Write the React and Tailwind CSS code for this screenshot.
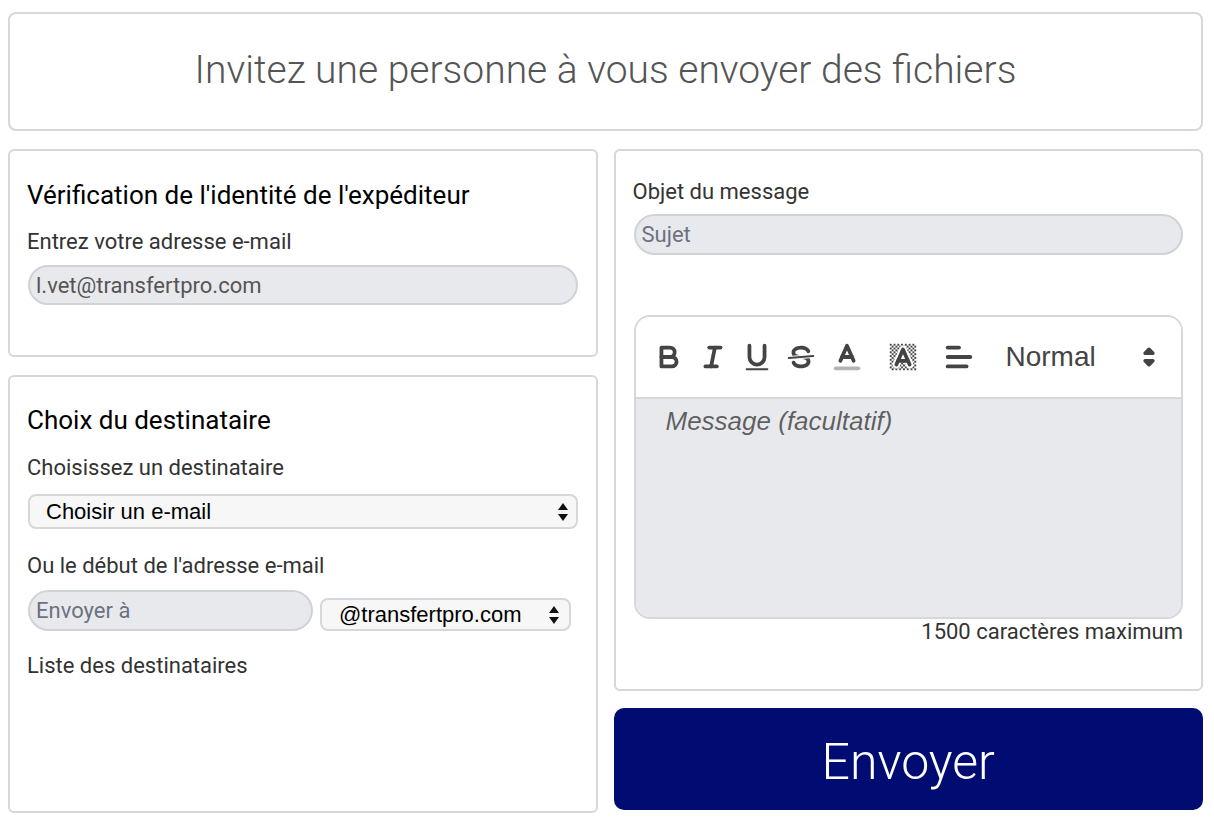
import React from "react";

const roboto = { fontFamily: "Roboto, 'Liberation Sans', sans-serif" };

function SelectArrows({ className = "" }) {
  return (
    <svg width="12" height="20" viewBox="0 0 12 20" className={className}>
      <polygon points="6,1 11,8 1,8" fill="#111" />
      <polygon points="1,12 11,12 6,19" fill="#111" />
    </svg>
  );
}

const stroke = {
  fill: "none",
  stroke: "#444",
  strokeWidth: 2,
  strokeLinecap: "round",
  strokeLinejoin: "round",
};

function IconBold() {
  return (
    <svg width="34" height="34" viewBox="0 0 18 18">
      <path {...stroke} d="M5,4H9.5A2.5,2.5,0,0,1,12,6.5v0A2.5,2.5,0,0,1,9.5,9H5A0,0,0,0,1,5,9V4A0,0,0,0,1,5,4Z" />
      <path {...stroke} d="M5,9h5.5A2.5,2.5,0,0,1,13,11.5v0A2.5,2.5,0,0,1,10.5,14H5a0,0,0,0,1,0,0V9A0,0,0,0,1,5,9Z" />
    </svg>
  );
}
function IconItalic() {
  return (
    <svg width="34" height="34" viewBox="0 0 18 18">
      <line {...stroke} x1="7" x2="13" y1="4" y2="4" />
      <line {...stroke} x1="5" x2="11" y1="14" y2="14" />
      <line {...stroke} x1="8" x2="10" y1="14" y2="4" />
    </svg>
  );
}
function IconUnderline() {
  return (
    <svg width="34" height="34" viewBox="0 0 18 18">
      <path {...stroke} d="M5,3V9a4.012,4.012,0,0,0,4,4H9a4.012,4.012,0,0,0,4-4V3" />
      <rect fill="#444" height="1" rx="0.5" ry="0.5" width="12" x="3" y="15" />
    </svg>
  );
}
function IconStrike() {
  return (
    <svg width="34" height="34" viewBox="0 0 18 18">
      <line {...stroke} strokeWidth="1" x1="15.5" x2="2.5" y1="8.5" y2="9.5" />
      <path fill="#444" d="M9.007,8C6.542,7.791,6,7.519,6,6.5,6,5.792,7.283,5,9,5c1.571,0,2.765.679,2.969,1.309a1,1,0,0,0,1.9-.617C13.356,4.106,11.354,3,9,3,6.2,3,4,4.538,4,6.5a3.2,3.2,0,0,0,.5,1.843Z" />
      <path fill="#444" d="M8.984,10C11.457,10.208,12,10.479,12,11.5c0,.708-1.283,1.5-3,1.5-1.571,0-2.765-.679-2.969-1.309a1,1,0,1,0-1.9.617C4.644,13.894,6.646,15,9,15c2.8,0,5-1.538,5-3.5a3.2,3.2,0,0,0-.5-1.843Z" />
    </svg>
  );
}
function IconColor() {
  return (
    <svg width="34" height="34" viewBox="0 0 18 18">
      <line {...stroke} stroke="#b4b4b4" x1="3" x2="15" y1="15" y2="15" />
      <polyline {...stroke} points="5.5 11 9 3 12.5 11" />
      <line {...stroke} x1="11.63" x2="6.38" y1="9" y2="9" />
    </svg>
  );
}
const checker = [];
for (let y = 2; y < 16; y++) {
  for (let x = 2; x < 16; x++) {
    if ((x + y) % 2 === 0) checker.push([x, y]);
  }
}
function IconBackground() {
  return (
    <svg width="34" height="34" viewBox="0 0 18 18">
      <g fill="#444">
        {checker.map(([x, y]) => (
          <rect key={x + "-" + y} x={x} y={y} width="1" height="1" />
        ))}
      </g>
      <polyline {...stroke} stroke="#fff" strokeWidth="4" points="5.5 13 9 5 12.5 13" />
      <polyline {...stroke} points="5.5 13 9 5 12.5 13" />
      <line {...stroke} x1="11.63" x2="6.38" y1="11" y2="11" />
    </svg>
  );
}
function IconAlign() {
  return (
    <svg width="34" height="34" viewBox="0 0 18 18">
      <line {...stroke} x1="3" x2="15" y1="9" y2="9" />
      <line {...stroke} x1="3" x2="13" y1="14" y2="14" />
      <line {...stroke} x1="3" x2="9" y1="4" y2="4" />
    </svg>
  );
}
function PickerArrows() {
  return (
    <svg width="34" height="34" viewBox="0 0 18 18">
      <polygon {...stroke} fill="#444" points="7 11 9 13 11 11 7 11" />
      <polygon {...stroke} fill="#444" points="7 7 9 5 11 7 7 7" />
    </svg>
  );
}

export default function App() {
  return (
    <div className="w-[1214px] h-[820px] bg-white overflow-hidden" style={roboto}>
      <div className="ml-2 w-[1195px] pt-3">
        <div className="h-[119px] border-2 border-[#d5d7db] rounded-lg flex items-center justify-center">
          <h1 className="text-[39px] font-light text-[#555] leading-none -mt-[2px]">
            Invitez une personne à vous envoyer des fichiers
          </h1>
        </div>

        <div className="mt-[18px] grid grid-cols-2 gap-4">
          {/* Left column */}
          <div className="flex flex-col gap-[18px]">
            <div className="h-[208px] border-2 border-[#d5d7db] rounded-md pl-[17px] pr-[18px] pt-[30px]">
              <h2 className="text-[26px] leading-[28px] text-black">
                Vérification de l'identité de l'expéditeur
              </h2>
              <div className="mt-[21px] text-[22px] leading-[24px] text-[#333]">
                Entrez votre adresse e-mail
              </div>
              <div className="mt-[11px] ml-px h-[40px] rounded-full bg-[#e8e9ed] border-2 border-[#cfd3d8] flex items-center pl-[6px] text-[22px] text-[#555]">
                l.vet@transfertpro.com
              </div>
            </div>

            <div className="h-[438px] border-2 border-[#d5d7db] rounded-md pl-[17px] pr-[18px] pt-[29px]">
              <h2 className="text-[26px] leading-[28px] text-black">Choix du destinataire</h2>
              <div className="mt-[22px] text-[22px] leading-[24px] text-[#333]">
                Choisissez un destinataire
              </div>
              <div
                className="mt-[14px] ml-px h-[35px] rounded-lg bg-[#f7f7f7] border-2 border-[#d5d7db] flex items-center justify-between pl-[16px] pr-[7px] text-[22px] text-black"
                style={{ fontFamily: "'Liberation Sans', Arial, sans-serif" }}
              >
                <span>Choisir un e-mail</span>
                <SelectArrows />
              </div>
              <div className="mt-[25px] text-[22px] leading-[24px] text-[#333]">
                Ou le début de l'adresse e-mail
              </div>
              <div className="mt-[12px] ml-px flex items-end gap-[7px]">
                <div className="w-[285px] h-[41px] rounded-full bg-[#e8e9ed] border-2 border-[#cfd3d8] flex items-center pl-[6px] text-[22px] text-[#6b7280]">
                  Envoyer à
                </div>
                <div
                  className="w-[251px] h-[33px] rounded-lg bg-[#f7f7f7] border-2 border-[#d5d7db] flex items-center justify-between pl-[17px] pr-[9px] text-[22px] text-black"
                  style={{ fontFamily: "'Liberation Sans', Arial, sans-serif" }}
                >
                  <span>@transfertpro.com</span>
                  <SelectArrows />
                </div>
              </div>
              <div className="mt-[23px] text-[22px] leading-[24px] text-[#333]">
                Liste des destinataires
              </div>
            </div>
          </div>

          {/* Right column */}
          <div className="flex flex-col gap-[17px]">
            <div className="h-[542px] border-2 border-[#d5d7db] rounded-md pl-[17px] pr-[18px] pt-[29px]">
              <div className="text-[22px] leading-[24px] text-[#333]">Objet du message</div>
              <div className="mt-[10px] ml-px h-[41px] rounded-full bg-[#e8e9ed] border-2 border-[#cfd3d8] flex items-center pl-[6px] text-[22px] text-[#6b7280]">
                Sujet
              </div>
              <div className="mt-[60px] ml-px h-[304px] border-2 border-[#d5d7db] rounded-[16px] overflow-hidden flex flex-col">
                <div className="h-[82px] shrink-0 bg-white border-b-2 border-[#d5d7db] flex items-center pl-[16px]">
                  <div className="flex items-center gap-[10px]">
                    <IconBold />
                    <IconItalic />
                    <IconUnderline />
                    <IconStrike />
                  </div>
                  <div className="ml-[12px] flex items-center gap-[22px]">
                    <IconColor />
                    <IconBackground />
                    <IconAlign />
                  </div>
                  <div
                    className="ml-[30px] w-[160px] flex items-center justify-between text-[28px] text-[#444]"
                    style={{ fontFamily: "'Liberation Sans', Arial, sans-serif" }}
                  >
                    <span>Normal</span>
                    <PickerArrows />
                  </div>
                </div>
                <div
                  className="flex-1 bg-[#e8e9ed] pt-[6px] pl-[30px] text-[26px] leading-[32px] italic text-black/60"
                  style={{ fontFamily: "'Liberation Sans', Arial, sans-serif" }}
                >
                  Message (facultatif)
                </div>
              </div>
              <div className="text-right text-[22px] leading-[24px] text-[#333] mt-px">
                1500 caractères maximum
              </div>
            </div>

            <div className="h-[102px] rounded-[10px] bg-[#000c71] flex items-center justify-center">
              <span className="text-[50px] font-light text-white leading-none mt-[6px]">Envoyer</span>
            </div>
          </div>
        </div>
      </div>
    </div>
  );
}
